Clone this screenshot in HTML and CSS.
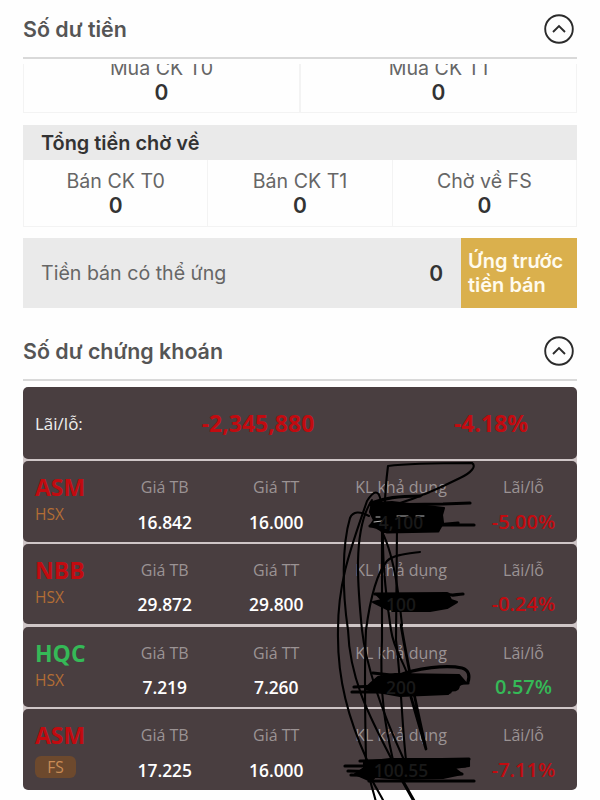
FILE: index.html
```html
<!DOCTYPE html>
<html lang="vi">
<head>
	<meta charset="utf-8">
	<title>Số dư</title>
	<link rel="stylesheet" href="styles.css">
</head>
<body>
<div class="page">
	<div class="heading">
		<h2>Số dư tiền</h2>
		<svg class="toggle" viewBox="0 0 30 30"><circle cx="15" cy="15" r="13.8"/><path d="M9 18 L15 12 L21 18"/></svg>
	</div>
	<div class="cells clipped">
		<div class="cell"><span>Mua CK T0</span><b>0</b></div>
		<div class="cell"><span>Mua CK T1</span><b>0</b></div>
	</div>

	<div class="subtitle">Tổng tiền chờ về</div>
	<div class="cells pending">
		<div class="cell"><span>Bán CK T0</span><b>0</b></div>
		<div class="cell"><span>Bán CK T1</span><b>0</b></div>
		<div class="cell"><span>Chờ về FS</span><b>0</b></div>
	</div>

	<div class="advance">
		<span>Tiền bán có thể ứng</span>
		<b>0</b>
		<button>Ứng trước<br>tiền bán</button>
	</div>

	<div class="heading second">
		<h2>Số dư chứng khoán</h2>
		<svg class="toggle" viewBox="0 0 30 30"><circle cx="15" cy="15" r="13.8"/><path d="M9 18 L15 12 L21 18"/></svg>
	</div>

	<div class="stocks">
		<div class="total">
			<span>Lãi/lỗ:</span>
			<b class="down">-2,345,880</b>
			<b class="down">-4.18%</b>
		</div>
		<div class="stock">
			<div class="code"><b class="down">ASM</b><span>HSX</span></div>
			<div class="col"><span>Giá TB</span><b>16.842</b></div>
			<div class="col"><span>Giá TT</span><b>16.000</b></div>
			<div class="col qty"><span>KL khả dụng</span><b>4,100</b></div>
			<div class="col rate"><span>Lãi/lỗ</span><b class="down">-5.00%</b></div>
		</div>
		<div class="stock">
			<div class="code"><b class="down">NBB</b><span>HSX</span></div>
			<div class="col"><span>Giá TB</span><b>29.872</b></div>
			<div class="col"><span>Giá TT</span><b>29.800</b></div>
			<div class="col qty"><span>KL khả dụng</span><b>100</b></div>
			<div class="col rate"><span>Lãi/lỗ</span><b class="down">-0.24%</b></div>
		</div>
		<div class="stock">
			<div class="code"><b class="up">HQC</b><span>HSX</span></div>
			<div class="col"><span>Giá TB</span><b>7.219</b></div>
			<div class="col"><span>Giá TT</span><b>7.260</b></div>
			<div class="col qty"><span>KL khả dụng</span><b>200</b></div>
			<div class="col rate"><span>Lãi/lỗ</span><b class="up">0.57%</b></div>
		</div>
		<div class="stock">
			<div class="code"><b class="down">ASM</b><span class="tag">FS</span></div>
			<div class="col"><span>Giá TB</span><b>17.225</b></div>
			<div class="col"><span>Giá TT</span><b>16.000</b></div>
			<div class="col qty"><span>KL khả dụng</span><b>100.55</b></div>
			<div class="col rate"><span>Lãi/lỗ</span><b class="down">-7.11%</b></div>
		</div>
	</div>

	<!-- pen marks over the quantity column -->
	<svg class="scribble" viewBox="0 0 600 800">
		<!-- long strokes -->
		<path d="M385 505 C385 490 387 474 388 466 C410 463 445 463 472 463 C477 466 471 473 460 478 C440 488 420 497 400 503"/>
		<path d="M381 502 C379 489 374 490 367 501 C352 545 338 580 338 630 C337 680 349 720 367 760"/>
		<path d="M369 516 C360 511 353 511 350 518 C342 545 342 590 348 630 C350 684 374 724 392 760"/>
		<path d="M372 500 C352 530 358 590 362 630 C367 675 389 727 404 760"/>
		<path d="M420 552 C405 554 393 555 387 561 C376 574 370 600 366 630 C364 670 365 715 366 760"/>
		<path d="M382 528 L382 640 C379 700 387 733 393 760"/>
		<path d="M380 528 C394 552 399 596 402 625"/>
		<path d="M397 528 L396 640 C401 680 402 725 406 760"/>
		<path d="M383 530 C382 575 389 615 391 630 C394 650 403 660 408 676"/>
		<path d="M401 625 C407 660 415 700 426 749 M411 697 L426 749" class="bold"/>
		<!-- ASM -->
		<path class="ink" d="M372 503 L392 502 L444 508 L442 515 L443 523 L439 530 L384 532 L377 528 L370 526 L374 520 L370 512 Z"/>
		<path class="mid" d="M371 503 C386 498 397 496 420 496 M371 505 L443 504 L470 503 M370 526 L400 525 L474 525 M387 532 L438 531 M425 526 L458 523"/>
		<path class="glint" d="M397 516 H408 M416 516 H424 M374 522 L382 521 M376 517 h4"/>
		<!-- NBB -->
		<path class="ink" d="M376 594 L448 594 L451 600 L457 602 L447 608 L430 611 L391 611 L381 606 L373 602 L382 600 Z"/>
		<path class="mid" d="M375 594 L447 593.5 C452 597 456 594 463 594"/>
		<path class="glint" d="M390 611 h1"/>
		<!-- HQC -->
		<path class="mid" d="M395 677 C417 667 448 665 462 668 C469 670 470 676 468 682 M373 673 L400 676 M354 687 L400 685 L468 683 M352 692 L450 692 M452 690 C457 690 459 688 458 684"/>
		<path class="ink" d="M378 677 L395 674 L459 675 L465 682 L454 688 L448 694 L400 696 L378 692 L365 689 L371 683 Z"/>
		<!-- ASM, FS -->
		<path class="ink" d="M364 762 L390 759 L469 759 L469 766 L454 768 L462 774 L443 778 L403 779 L375 777 L371 781 L355 774 L364 768 Z"/>
		<path class="mid" d="M360 761 L469 759 M345 766 L465 766 M348 771 L462 774 M351 775 L442 777 M369 781 L474 781"/>
		<path d="M370 780 C372 788 374 794 376 802 M372 780 C376 788 380 794 384 802"/>
		<path class="mid" d="M401 778 L414 801"/>
	</svg>
</div>
</body>
</html>
```

FILE: styles.css
```css
* {
	box-sizing: border-box;
}
body {
	margin: 0;
	background: #fefefe;
	font-family: "Inter", "Liberation Sans", sans-serif;
	color: #333;
}
.page {
	position: relative;
	width: 600px;
	height: 800px;
	padding: 0 23px;
	overflow: hidden;
}
.heading {
	display: flex;
	align-items: center;
	justify-content: space-between;
	height: 59px;
	padding-right: 3px;
	border-bottom: 2px solid #d9d9d9;
}
.heading h2 {
	margin: 0;
	font-size: 21.4px;
	font-weight: 600;
	color: #555;
}
.toggle {
	width: 30px;
	height: 30px;
	fill: none;
	stroke: #2b2b2b;
	stroke-width: 1.9;
}
.cells {
	display: flex;
	border: 1px solid #f3f3f3;
	border-top: 0;
}
.cell {
	flex: 1;
	display: flex;
	flex-direction: column;
	align-items: center;
	font-size: 19.6px;
	line-height: 24px;
	color: #666;
}
.cell + .cell {
	border-left: 1px solid #f3f3f3;
}
.cell b {
	margin-top: 1px;
	font-size: 21px;
	font-weight: 600;
	color: #333;
}
.clipped {
	height: 49px;
	margin-top: 5px;
	align-items: flex-end;
	overflow: hidden;
}
.clipped .cell {
	height: 56px;
}
.clipped .cell + .cell {
	border-left-width: 2px;
}
.subtitle {
	height: 35px;
	margin-top: 12px;
	padding-left: 18px;
	background: #eaeaea;
	font-size: 19.9px;
	line-height: 36px;
	font-weight: 600;
}
.pending {
	height: 67px;
}
.pending .cell {
	padding-top: 9px;
}
.advance {
	display: flex;
	align-items: center;
	height: 70px;
	margin-top: 11px;
	padding-left: 18px;
	background: #eaeaea;
	font-size: 19.6px;
	color: #666;
}
.advance b {
	margin-left: auto;
	margin-right: 18px;
	font-size: 21px;
	font-weight: 600;
	color: #333;
}
.advance button {
	width: 116px;
	height: 70px;
	padding: 0 0 0 7px;
	border: 0;
	background: #dab04d;
	color: #fffbee;
	font: 600 20px/24px "Inter", sans-serif;
	text-align: left;
	white-space: nowrap;
}
.second {
	height: 58px;
	margin-top: 15px;
}
.stocks {
	display: flex;
	flex-direction: column;
	gap: 2.2px;
	margin-top: 6px;
	background: linear-gradient(#fefefe 0 20px, #cfc6c7 20px 390px, #fefefe 390px);
	border-radius: 6px;
	font-family: "Open Sans", "Noto Sans", sans-serif;
}
.total, .stock {
	display: flex;
	background: #493e40;
	border-radius: 5px;
	color: #fff;
}
.total {
	height: 72px;
	align-items: center;
	padding-left: 12px;
	font-size: 17px;
}
.total span {
	width: 140px;
	color: #eee;
}
.total b {
	width: 166px;
	text-align: center;
	font-size: 23px;
}
.total b + b {
	margin-left: 67px;
}
.stock {
	height: 80.5px;
	padding-left: 12px;
}
.code {
	width: 74px;
	padding-top: 11px;
}
.code b {
	display: block;
	font-size: 23px;
	line-height: 31px;
}
.code span {
	display: block;
	font-size: 15.5px;
	line-height: 22px;
	color: #b36d35;
}
.code .tag {
	width: 41px;
	margin-top: 5px;
	border-radius: 6px;
	background: #6d492d;
	color: #c98c56;
	text-align: center;
}
.col {
	width: 111.5px;
	padding-top: 14px;
	text-align: center;
}
.col span {
	display: block;
	font-size: 16px;
	line-height: 24px;
	color: #9b9394;
	white-space: nowrap;
}
.col b {
	display: block;
	margin-top: 10.5px;
	font-size: 17.4px;
	line-height: 24px;
	font-weight: 600;
}
.qty {
	width: 138px;
}
/* numbers barely show through the ink */
.qty b {
	position: relative;
	z-index: 1;
	color: #191919;
}
.rate {
	width: 107px;
}
.rate b {
	font-size: 20px;
}
.stock .down, .total .down {
	color: #c20b10;
}
.stock .up {
	color: #35b957;
}
/* hand drawn ink, lies over the list */
.scribble {
	position: absolute;
	left: 0;
	top: 0;
	width: 600px;
	height: 800px;
	fill: none;
	stroke: #000;
	stroke-width: 2.1;
	stroke-linecap: round;
	stroke-linejoin: round;
	pointer-events: none;
}
.scribble .ink {
	fill: #000;
}
.scribble .mid {
	stroke-width: 3.2;
}
.scribble .bold {
	stroke-width: 2.8;
}
.scribble .glint {
	stroke: #b9b9b9;
	stroke-width: 1;
}
```
